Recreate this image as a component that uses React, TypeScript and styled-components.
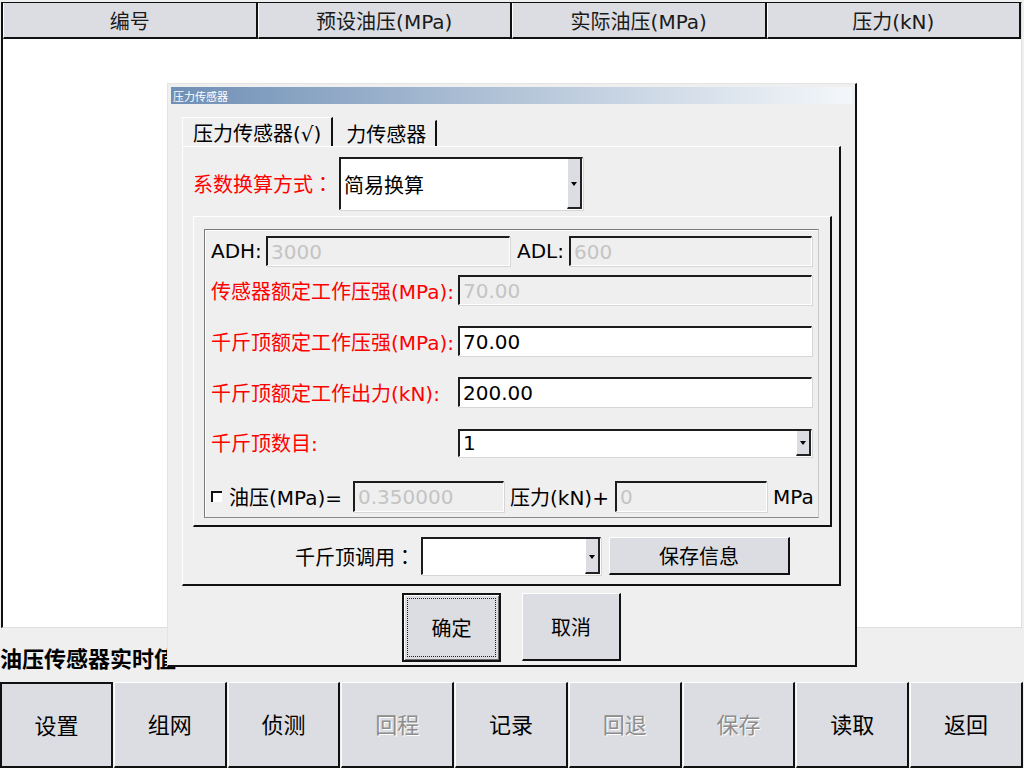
import React from "react";
import styled, { createGlobalStyle, css } from "styled-components";

const GlobalStyle = createGlobalStyle`
  html, body {
    margin: 0;
    padding: 0;
    background: #efefef;
  }
  body {
    font-family: "DejaVu Sans", "Noto Sans CJK SC", sans-serif;
    color: #000;
  }
  * {
    box-sizing: border-box;
  }
`;

const raised = css`
  border-top: 1px solid #ffffff;
  border-left: 1px solid #ffffff;
  border-right: 2px solid #111;
  border-bottom: 2px solid #111;
`;

const sunken = css`
  border-top: 2px solid #1c1c1c;
  border-left: 2px solid #1c1c1c;
  border-right: 1px solid #ffffff;
  border-bottom: 1px solid #ffffff;
  box-shadow: 1px 1px 0 #d6d6d6;
`;

const Screen = styled.div`
  position: relative;
  width: 1024px;
  height: 768px;
  overflow: hidden;
  background: #efefef;
`;

const Table = styled.div`
  margin: 2px 0 0 1px;
  width: 1021px;
  height: 626px;
  background: #fff;
  border-left: 2px solid #111;
  border-top: 1px solid #111;
  border-right: 1px solid #dedede;
  border-bottom: 1px solid #dedede;
`;

const HeaderRow = styled.div`
  display: grid;
  grid-template-columns: repeat(4, 1fr);
  height: 36px;
`;

const HeaderCell = styled.div`
  display: flex;
  align-items: center;
  justify-content: center;
  background: #dcdde2;
  border-left: 1px solid #ffffff;
  border-right: 2px solid #111;
  border-bottom: 2px solid #111;
  font-size: 20px;
  color: #1a1a1a;
`;

const StatusRow = styled.div`
  height: 54px;
  display: flex;
  align-items: center;
  padding-top: 3px;
  font-size: 22px;
  font-weight: bold;
  white-space: nowrap;
`;

const ButtonBar = styled.div`
  display: grid;
  grid-template-columns: repeat(9, 1fr);
  gap: 1px;
  width: 1023px;
  height: 86px;
`;

const BarButton = styled.div<{ $active?: boolean; $disabled?: boolean }>`
  display: flex;
  align-items: center;
  justify-content: center;
  padding-bottom: 3px;
  background: #dcdde2;
  font-size: 22px;
  ${raised};
  ${(p) =>
    p.$active &&
    css`
      border: 2px solid #111;
    `}
  color: ${(p) => (p.$disabled ? "#8d8d8d" : "#000")};
  text-shadow: ${(p) => (p.$disabled ? "1px 1px 0 #ffffff" : "none")};
`;

/* ---------- dialog ---------- */

const Dialog = styled.div`
  position: absolute;
  left: 167px;
  top: 83px;
  width: 690px;
  height: 584px;
  padding: 3px;
  background: #efefef;
  border-top: 1px solid #e4e4e4;
  border-left: 1px solid #e4e4e4;
  border-right: 2px solid #111;
  border-bottom: 2px solid #111;
`;

const TitleBar = styled.div`
  height: 17px;
  padding-left: 2px;
  display: flex;
  align-items: center;
  background: linear-gradient(to right, #6f8fb6, #b3c4d8 50%, #f4f7fa);
  color: #ffffff;
  font-size: 11px;
`;

const TabWidget = styled.div`
  margin: 13px 0 0 11px;
  width: 659px;
`;

const TabBar = styled.div`
  display: flex;
  align-items: flex-end;
  height: 29px;
`;

const Tab = styled.div<{ $selected?: boolean }>`
  height: ${(p) => (p.$selected ? "29px" : "26px")};
  display: flex;
  align-items: center;
  padding: 0 ${(p) => (p.$selected ? "10px" : "9px")} 0 10px;
  margin-right: 2px;
  font-size: 20px;
  border-top: 1px solid ${(p) => (p.$selected ? "#ffffff" : "#efefef")};
  border-left: 1px solid ${(p) => (p.$selected ? "#ffffff" : "#efefef")};
  border-right: 2px solid #111;
  white-space: nowrap;
`;

const Pane = styled.div`
  height: 440px;
  border-top: 1px solid #ffffff;
  border-left: 1px solid #ffffff;
  border-right: 2px solid #111;
  border-bottom: 2px solid #111;
  padding: 10px 0 0 10px;
`;

const FormRow = styled.div<{ $top?: number; $indent?: number }>`
  display: flex;
  align-items: center;
  margin-top: ${(p) => p.$top ?? 0}px;
  padding-left: ${(p) => p.$indent ?? 0}px;
`;

const Label = styled.div<{ $width?: number; $red?: boolean; $gap?: number }>`
  width: ${(p) => (p.$width ? `${p.$width}px` : "auto")};
  margin-left: ${(p) => p.$gap ?? 0}px;
  flex: none;
  font-size: 20px;
  color: ${(p) => (p.$red ? "#ff0000" : "#000")};
  white-space: nowrap;
`;

/* full-width colon drawn centred in its box, as in the original */
const Colon = styled.span`
  font-family: "Noto Sans CJK TC", "Noto Sans CJK SC", sans-serif;
`;

const Combo = styled.div<{ $width: number; $height: number }>`
  position: relative;
  display: flex;
  align-items: center;
  width: ${(p) => p.$width}px;
  height: ${(p) => p.$height}px;
  padding-left: 3px;
  background: #fff;
  font-size: 20px;
  ${sunken};
`;

const DropButton = styled.div`
  position: absolute;
  top: 0;
  right: 0;
  bottom: 0;
  width: 15px;
  display: flex;
  align-items: center;
  justify-content: center;
  background: #dcdde2;
  border-left: 1px solid #ffffff;
  border-right: 2px solid #222;
  border-bottom: 2px solid #222;

  &::after {
    content: "";
    border-left: 3px solid transparent;
    border-right: 3px solid transparent;
    border-top: 4px solid #000;
    margin-top: 2px;
  }
`;

const GroupOuter = styled.div`
  margin: 6px 0 0 0;
  width: 639px;
  height: 311px;
  padding: 12px 0 0 10px;
  border-top: 1px solid #ffffff;
  border-left: 1px solid #ffffff;
  border-right: 2px solid #111;
  border-bottom: 2px solid #111;
`;

const GroupInner = styled.div`
  width: 615px;
  height: 289px;
  padding: 6px 0 0 6px;
  border-top: 1px solid #7a7a7a;
  border-left: 1px solid #7a7a7a;
  border-bottom: 1px solid #8a8a8a;
  border-right: 1px solid #c9c9c9;
  box-shadow: inset 1px 1px 0 #ffffff;
`;

const Field = styled.div<{ $width: number; $disabled?: boolean; $tall?: boolean }>`
  display: flex;
  align-items: center;
  flex: none;
  width: ${(p) => p.$width}px;
  height: ${(p) => (p.$tall ? 31 : 30)}px;
  padding-left: 3px;
  font-size: 20px;
  background: ${(p) => (p.$disabled ? "#efefef" : "#ffffff")};
  color: ${(p) => (p.$disabled ? "#c4c4c4" : "#000")};
  ${sunken};
`;

const CheckBox = styled.div`
  width: 11px;
  height: 11px;
  flex: none;
  margin-right: 7px;
  background: #fff;
  border-top: 2px solid #111;
  border-left: 2px solid #111;
`;

const PushButton = styled.div<{ $width: number; $height: number; $default?: boolean; $gap?: number }>`
  position: relative;
  display: flex;
  align-items: center;
  justify-content: center;
  width: ${(p) => p.$width}px;
  height: ${(p) => p.$height}px;
  margin-left: ${(p) => p.$gap ?? 0}px;
  flex: none;
  background: #dcdde2;
  font-size: 20px;
  ${raised};
  ${(p) =>
    p.$default &&
    css`
      border: 2px solid #111;
      box-shadow: inset 1px 1px 0 #ffffff, inset -1px -1px 0 #6d6d6d;
      &::before {
        content: "";
        position: absolute;
        inset: 3px;
        border: 1px dotted #222;
      }
    `}
`;

const DialogButtons = styled.div`
  display: flex;
  gap: 21px;
  margin-top: 7px;
  padding-left: 231px;
`;

const columns = ["编号", "预设油压(MPa)", "实际油压(MPa)", "压力(kN)"];

const barButtons = [
  { label: "设置", active: true },
  { label: "组网" },
  { label: "侦测" },
  { label: "回程", disabled: true },
  { label: "记录" },
  { label: "回退", disabled: true },
  { label: "保存", disabled: true },
  { label: "读取" },
  { label: "返回" },
];

const App = () => {
  return (
    <Screen>
      <GlobalStyle />
      <Table>
        <HeaderRow>
          {columns.map((c) => (
            <HeaderCell key={c}>{c}</HeaderCell>
          ))}
        </HeaderRow>
      </Table>
      <StatusRow>油压传感器实时值</StatusRow>
      <ButtonBar>
        {barButtons.map((b) => (
          <BarButton key={b.label} $active={b.active} $disabled={b.disabled}>
            {b.label}
          </BarButton>
        ))}
      </ButtonBar>

      <Dialog>
        <TitleBar>压力传感器</TitleBar>
        <TabWidget>
          <TabBar>
            <Tab $selected>压力传感器(√)</Tab>
            <Tab>力传感器</Tab>
          </TabBar>
          <Pane>
            <FormRow>
              <Label $width={146} $red>
                系数换算方式<Colon>：</Colon>
              </Label>
              <Combo $width={244} $height={53}>
                简易换算
                <DropButton />
              </Combo>
            </FormRow>

            <GroupOuter>
              <GroupInner>
                <FormRow>
                  <Label $width={55}>ADH:</Label>
                  <Field $width={244} $disabled>
                    3000
                  </Field>
                  <Label $width={52} $gap={7}>
                    ADL:
                  </Label>
                  <Field $width={243} $disabled>
                    600
                  </Field>
                </FormRow>
                <FormRow $top={9}>
                  <Label $width={247} $red>
                    传感器额定工作压强(MPa):
                  </Label>
                  <Field $width={354} $disabled>
                    70.00
                  </Field>
                </FormRow>
                <FormRow $top={21}>
                  <Label $width={247} $red>
                    千斤顶额定工作压强(MPa):
                  </Label>
                  <Field $width={354}>70.00</Field>
                </FormRow>
                <FormRow $top={21}>
                  <Label $width={247} $red>
                    千斤顶额定工作出力(kN):
                  </Label>
                  <Field $width={354}>200.00</Field>
                </FormRow>
                <FormRow $top={21}>
                  <Label $width={247} $red>
                    千斤顶数目:
                  </Label>
                  <Combo $width={354} $height={28}>
                    1
                    <DropButton />
                  </Combo>
                </FormRow>
                <FormRow $top={24}>
                  <CheckBox />
                  <Label $width={124}>油压(MPa)=</Label>
                  <Field $width={151} $disabled $tall>
                    0.350000
                  </Field>
                  <Label $width={105} $gap={6}>
                    压力(kN)+
                  </Label>
                  <Field $width={152} $disabled $tall>
                    0
                  </Field>
                  <Label $gap={6}>MPa</Label>
                </FormRow>
              </GroupInner>
            </GroupOuter>

            <FormRow $top={10} $indent={102}>
              <Label $width={126}>
                千斤顶调用<Colon>：</Colon>
              </Label>
              <Combo $width={180} $height={38}>
                <DropButton />
              </Combo>
              <PushButton $width={181} $height={38} $gap={8}>
                保存信息
              </PushButton>
            </FormRow>
          </Pane>
        </TabWidget>
        <DialogButtons>
          <PushButton $width={99} $height={69} $default>
            确定
          </PushButton>
          <PushButton $width={99} $height={68}>
            取消
          </PushButton>
        </DialogButtons>
      </Dialog>
    </Screen>
  );
};

export default App;
